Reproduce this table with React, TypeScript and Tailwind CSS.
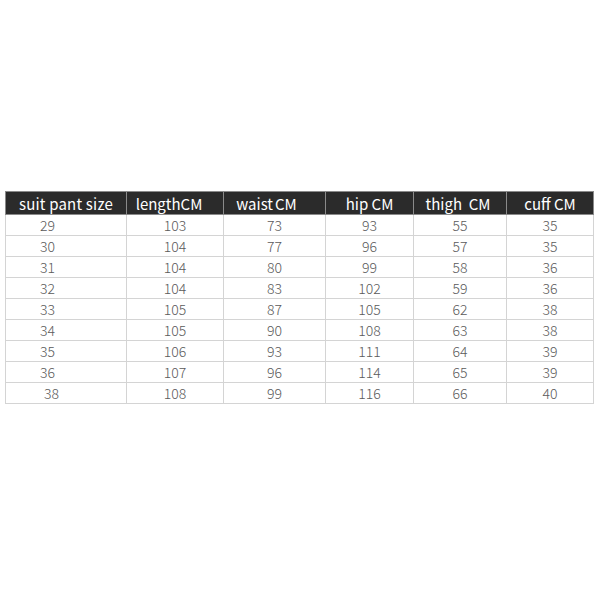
import React from 'react';

const widths = ['w-[121px]', 'w-[97px]', 'w-[102px]', 'w-[88px]', 'w-[93px]', 'w-[87px]'];

const headers: React.ReactNode[] = [
  <span className="tracking-[0.2px]">suit pant size</span>,
  <span className="-ml-3">length<span className="text-[15px]">CM</span></span>,
  <span className="-ml-4">waist<span className="ml-[2px]">CM</span></span>,
  <span>hip CM</span>,
  <span className="-ml-1">thigh&nbsp; CM</span>,
  <span>cuff CM</span>,
];

const rows = [
  ['29', '103', '73', '93', '55', '35'],
  ['30', '104', '77', '96', '57', '35'],
  ['31', '104', '80', '99', '58', '36'],
  ['32', '104', '83', '102', '59', '36'],
  ['33', '105', '87', '105', '62', '38'],
  ['34', '105', '90', '108', '63', '38'],
  ['35', '106', '93', '111', '64', '39'],
  ['36', '107', '96', '114', '65', '39'],
  ['38', '108', '99', '116', '66', '40'],
];

export default function App() {
  return (
    <div className="w-[600px] h-[600px] bg-white pt-[191px] pl-[5px] font-['Noto_Sans_CJK_KR','Noto_Sans',sans-serif]">
      <table className="border-collapse table-fixed">
        <thead>
          <tr className="h-[23px] bg-[#2b2b2b] text-white text-[15px] leading-none">
            {headers.map((h, i) => (
              <th
                key={i}
                className={`${widths[i]} border border-[#8a8a8a] font-normal p-0 text-center`}
              >
                {h}
              </th>
            ))}
          </tr>
        </thead>
        <tbody>
          {rows.map((r, ri) => (
            <tr key={ri} className="h-[21px] text-[14px] leading-none text-[#5a5a5a] font-light">
              {r.map((c, ci) => (
                <td
                  key={ci}
                  className={`border border-[#d4d4d4] p-0 ${
                    ci === 0 ? (ri === 8 ? 'text-left pl-[38px]' : 'text-left pl-[34px]') : 'text-center'
                  }`}
                >
                  {c}
                </td>
              ))}
            </tr>
          ))}
        </tbody>
      </table>
    </div>
  );
}
